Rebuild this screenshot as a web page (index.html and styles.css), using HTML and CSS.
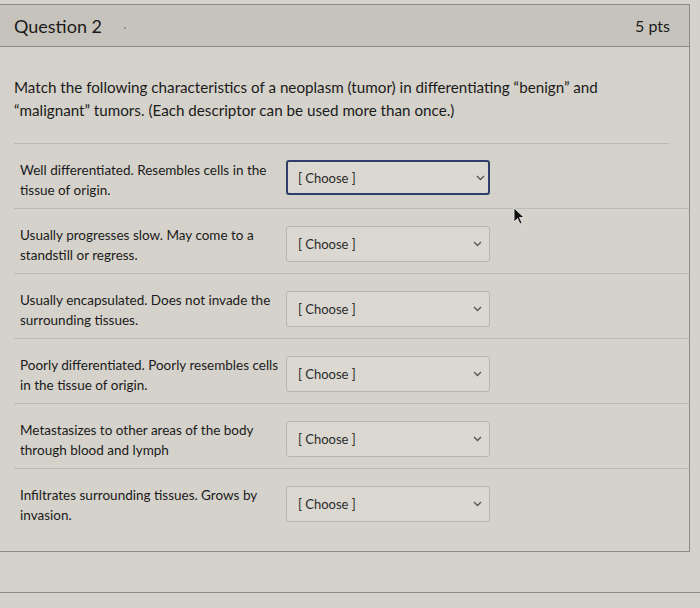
FILE: index.html
```html
<!DOCTYPE html>
<html>
<head>
<meta charset="utf-8">
<link rel="stylesheet" href="styles.css">
</head>
<body>
<div class="quiz">
  <div class="header">
    <span class="title">Question 2</span>
    <span class="dot"></span>
    <span class="pts">5 pts</span>
  </div>
  <div class="content">
    <p class="question">Match the following characteristics of a neoplasm (tumor) in differentiating “benign” and “malignant” tumors. (Each descriptor can be used more than once.)</p>
    <div class="rows">
      <div class="row">
        <div class="label">Well differentiated. Resembles cells in the tissue of origin.</div>
        <div class="select focused"><span>[ Choose ]</span><svg class="chev" width="9" height="6" viewBox="0 0 9 6"><path d="M1 1 L4.5 4.5 L8 1" fill="none" stroke="#555" stroke-width="1.3"/></svg></div>
      </div>
      <div class="row">
        <div class="label">Usually progresses slow. May come to a standstill or regress.</div>
        <div class="select"><span>[ Choose ]</span><svg class="chev" width="9" height="6" viewBox="0 0 9 6"><path d="M1 1 L4.5 4.5 L8 1" fill="none" stroke="#555" stroke-width="1.3"/></svg></div>
      </div>
      <div class="row">
        <div class="label">Usually encapsulated. Does not invade the surrounding tissues.</div>
        <div class="select"><span>[ Choose ]</span><svg class="chev" width="9" height="6" viewBox="0 0 9 6"><path d="M1 1 L4.5 4.5 L8 1" fill="none" stroke="#555" stroke-width="1.3"/></svg></div>
      </div>
      <div class="row">
        <div class="label">Poorly differentiated. Poorly resembles cells in the tissue of origin.</div>
        <div class="select"><span>[ Choose ]</span><svg class="chev" width="9" height="6" viewBox="0 0 9 6"><path d="M1 1 L4.5 4.5 L8 1" fill="none" stroke="#555" stroke-width="1.3"/></svg></div>
      </div>
      <div class="row">
        <div class="label">Metastasizes to other areas of the body through blood and lymph</div>
        <div class="select"><span>[ Choose ]</span><svg class="chev" width="9" height="6" viewBox="0 0 9 6"><path d="M1 1 L4.5 4.5 L8 1" fill="none" stroke="#555" stroke-width="1.3"/></svg></div>
      </div>
      <div class="row">
        <div class="label">Infiltrates surrounding tissues. Grows by invasion.</div>
        <div class="select"><span>[ Choose ]</span><svg class="chev" width="9" height="6" viewBox="0 0 9 6"><path d="M1 1 L4.5 4.5 L8 1" fill="none" stroke="#555" stroke-width="1.3"/></svg></div>
      </div>
    </div>
  </div>
</div>
<div class="footer"></div>
<svg class="cursor" width="14" height="20" viewBox="0 0 14 20"><path d="M1 1 L1 15 L4.5 11.5 L7 17 L9 16 L6.5 10.5 L11 10.5 Z" fill="#111" stroke="#eee" stroke-width="0.8"/></svg>
</body>
</html>
```
FILE: styles.css
```css
html, body {
  margin: 0;
  padding: 0;
}
body {
  background: #d5d2cb;
  font-family: Lato, "Open Sans", sans-serif;
  color: #1c1c1c;
  width: 700px;
  height: 608px;
  overflow: hidden;
  position: relative;
}
.quiz {
  margin-top: 4px;
  width: 690px;
  border-top: 1px solid #8e8b85;
  border-right: 1px solid #8e8b85;
  border-bottom: 1px solid #8e8b85;
  box-sizing: border-box;
}
.header {
  height: 42px;
  background: #c6c3bc;
  border-bottom: 1px solid #8e8b85;
  display: flex;
  align-items: center;
  padding: 0 19px 0 14px;
  box-sizing: border-box;
}
.title {
  font-size: 18px;
  color: #1a1a1a;
}
.dot {
  width: 2px;
  height: 2px;
  background: #9a978f;
  margin-left: 22px;
  margin-top: 4px;
}
.pts {
  margin-left: auto;
  font-size: 16px;
  color: #1a1a1a;
}
.content {
  padding: 29px 0 18px 14px;
}
.question {
  margin: 0;
  font-size: 15.2px;
  line-height: 23px;
  width: 600px;
  color: #1a1a1a;
}
.rows {
  margin-top: 21px;
}
.row {
  display: flex;
  align-items: flex-start;
  border-top: 1px solid #bdbab3;
  padding: 16px 0 12px 6px;
  height: 36px;
}
.row:first-child {
  margin-right: 20px;
}
.label {
  width: 264px;
  font-size: 13.5px;
  line-height: 20px;
  color: #1a1a1a;
}
.select {
  margin-left: 2px;
  margin-top: 1px;
  width: 204px;
  height: 36px;
  box-sizing: border-box;
  border: 1px solid #b7b4ad;
  border-radius: 3px;
  background: #dbd8d1;
  display: flex;
  align-items: center;
  padding: 0 7px 0 11px;
  font-size: 13px;
  color: #2a2a2a;
}
.select.focused {
  border: 2px solid #2f3f6a;
  padding-left: 10px;
  padding-right: 3px;
  height: 35px;
  margin-top: 0;
}
.chev {
  margin-left: auto;
}
.footer {
  height: 40px;
  border-bottom: 1px solid #8e8b85;
}
.cursor {
  position: absolute;
  left: 513px;
  top: 207px;
}
```
